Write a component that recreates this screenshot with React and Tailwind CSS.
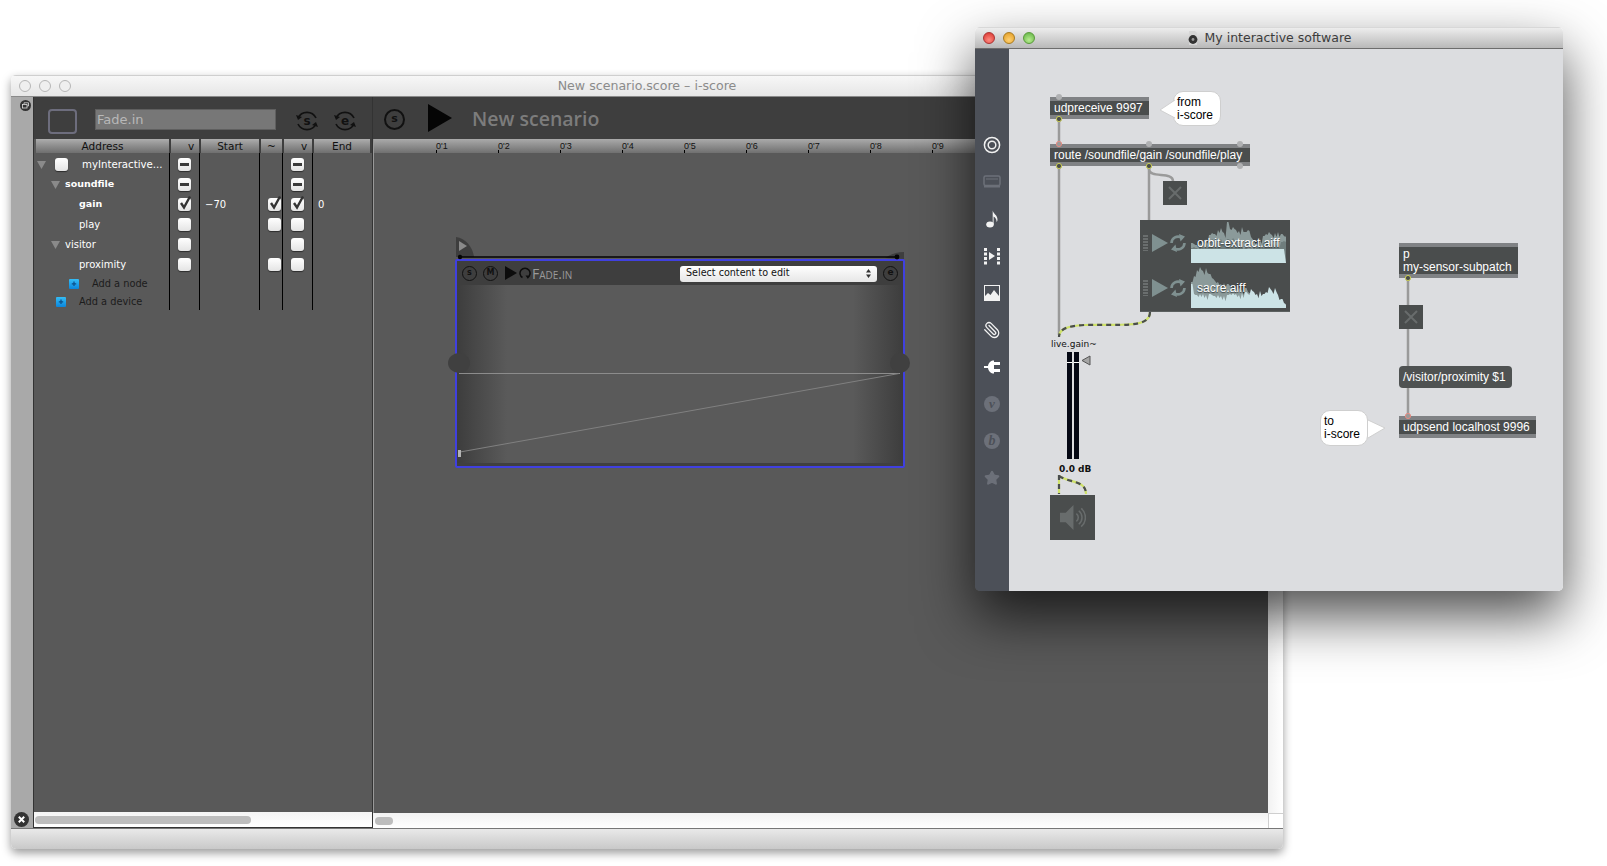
import { Paperclip, Star } from 'lucide-react'

// ── Data ────────────────────────────────────────────────────────────────────
const ROWS = [
  { name: 'myInteractive...', pad: 'pl-[2px]', tri: true, box: true, start: 'dash', end: 'dash', textPad: 'ml-[14px] text-[10.2px]' },
  { name: 'soundfile', pad: 'pl-[16px]', tri: true, bold: true, start: 'dash', end: 'dash', textPad: 'ml-[5px]' },
  { name: 'gain', pad: 'pl-[44px]', bold: true, start: 'check', mid: 'check', end: 'check', from: '−70', to: '0' },
  { name: 'play', pad: 'pl-[44px]', start: 'none', mid: 'none', end: 'none' },
  { name: 'visitor', pad: 'pl-[16px]', tri: true, start: 'none', end: 'none', textPad: 'ml-[5px]' },
  { name: 'proximity', pad: 'pl-[44px]', start: 'none', mid: 'none', end: 'none' },
]

const TICKS = [1, 2, 3, 4, 5, 6, 7, 8, 9]

const ORBIT = [20, 19, 18, 20, 22, 24, 28, 30, 29, 33, 35, 30, 41, 34, 36, 33, 32, 36, 31, 33, 26, 22, 20, 24, 27, 29, 31, 28, 30, 31, 29, 27, 31]
const ORBIT_DARK = [15, 16, 15, 17, 18, 20, 22, 24, 22, 25, 24, 22, 24, 23, 25, 22, 20, 18, 15, 14, 15, 16, 18, 19, 20, 22, 21, 20, 21, 20, 21, 22, 24]
const SACRE = [26, 32, 38, 41, 37, 40, 34, 30, 27, 26, 24, 25, 24, 22, 20, 19, 21, 18, 20, 16, 14, 13, 12, 10, 12, 14, 9, 12, 10, 8, 5, 3, 1]
const SACRE_LIGHT = [24, 14, 13, 14, 14, 13, 14, 13, 12, 13, 12, 12, 13, 14, 15, 14, 13, 15, 16, 14, 19, 16, 14, 17, 14, 16, 21, 17, 20, 13, 9, 5, 1]

// jagged silhouette: every sample gets a notch after it so the wave looks spiky
const toPoints = (arr, h, jag = 1) => {
  const pts = []
  arr.forEach((v, i) => {
    pts.push(`${i * 3},${h - v}`)
    pts.push(`${i * 3 + 1.5},${h - Math.max(0, v - ((i * 37) % 6) * jag)}`)
  })
  return `0,${h} ${pts.join(' ')} 95,${h}`
}

// ── i-score bits ────────────────────────────────────────────────────────────
function Check({ state, className = '' }) {
  return (
    <div className={`relative w-[13px] h-[13px] rounded-[3px] bg-gradient-to-b from-white to-[#e4e4e4] shadow-[0_1px_1px_rgba(0,0,0,0.5)] ${className}`}>
      {state === 'dash' && <div className="absolute left-[2px] right-[2px] top-[5px] h-[3px] bg-[#3a3a3a]" />}
      {state === 'check' && (
        <svg className="absolute -top-[3px] left-0 overflow-visible" width="15" height="16" viewBox="0 0 15 16">
          <path d="M3 8 L6 12.5 L12 1.5" fill="none" stroke="#333" strokeWidth="2.4" />
        </svg>
      )}
    </div>
  )
}

function Triangle() {
  return (
    <svg width="9" height="8" viewBox="0 0 9 8" className="shrink-0">
      <path d="M0 0 H9 L4.5 8 Z" fill="#8a8a8a" />
    </svg>
  )
}

function BluePlus() {
  return (
    <svg width="10" height="10" viewBox="0 0 10 10" className="shrink-0">
      <defs>
        <linearGradient id="bp" x1="0" y1="0" x2="0" y2="1">
          <stop offset="0" stopColor="#35bdf5" />
          <stop offset="1" stopColor="#0a86dc" />
        </linearGradient>
      </defs>
      <rect width="10" height="10" rx="1" fill="url(#bp)" />
      <path d="M5 2.5 V7 M2.8 4.8 H7.2" stroke="#0b4f8a" strokeWidth="1.2" />
    </svg>
  )
}

function SyncLetter({ letter }) {
  return (
    <svg width="24" height="24" viewBox="0 0 24 24">
      <path d="M3 9 A10 10 0 0 1 21 9" fill="none" stroke="#111" strokeWidth="1.7" />
      <path d="M21 15 A10 10 0 0 1 3 15" fill="none" stroke="#111" strokeWidth="1.7" />
      <path d="M1 6 L3 11 L7 8 Z M23 18 L21 13 L17 16 Z" fill="#111" />
      <text x="12" y="16" textAnchor="middle" fontSize="12" fontWeight="700" fontFamily="DejaVu Sans, sans-serif" fill="#111">{letter}</text>
    </svg>
  )
}

function Ring({ letter, size = 'w-[15px] h-[15px] text-[8px]', className = '' }) {
  return (
    <div className={`flex items-center justify-center rounded-full border border-[#111] text-[#111] font-bold ${size} ${className}`}>
      {letter}
    </div>
  )
}

function TreeRow({ row }) {
  const cell = 'flex items-center border-r border-black pt-[3px]'
  return (
    <div className="grid grid-cols-[135px_30px_60px_23px_30px_1fr] h-5">
      <div className={`${cell} ${row.pad}`}>
        {row.tri && <Triangle />}
        {row.box && <Check state="none" className="ml-[9px]" />}
        <span className={`${row.textPad || ''} whitespace-nowrap text-white ${row.bold ? 'font-bold text-[9.5px]' : ''}`}>{row.name}</span>
      </div>
      <div className={`${cell} pl-[8px]`}><Check state={row.start} /></div>
      <div className={`${cell} pl-[5px] text-white`}>{row.from}</div>
      <div className={`${cell} pl-[8px]`}>{row.mid && <Check state={row.mid} />}</div>
      <div className={`${cell} pl-[8px]`}><Check state={row.end} /></div>
      <div className="flex items-center pl-[5px] pt-[3px] text-white">{row.to}</div>
    </div>
  )
}

function AddRow({ label, pad, gap }) {
  return (
    <div className="grid grid-cols-[135px_30px_60px_23px_30px_1fr] h-[18px]">
      <div className={`flex items-center border-r border-black pt-[4px] text-[#1c1c1c] text-[9.8px] ${pad}`}>
        <BluePlus />
        <span className={`whitespace-nowrap ${gap}`}>{label}</span>
      </div>
      <div className="border-r border-black" />
      <div className="border-r border-black" />
      <div className="border-r border-black" />
      <div className="border-r border-black" />
      <div />
    </div>
  )
}

function Inspector() {
  const head = 'flex items-center justify-center h-[14px] pt-[2px] bg-gradient-to-b from-[#adadad] via-[#8d8d8d] to-[#6f6f6f] text-[#111] text-[10.5px] border-r-2 border-[#3e3e3e]'
  return (
    <div className="w-[340px] flex flex-col border-x border-[#333] bg-[#595959] font-['DejaVu_Sans',sans-serif] text-[10px]">
      <div className="h-[42px] bg-[#3e3e3e] flex items-start pt-3">
        <div className="ml-[14px] w-[29px] h-[25px] rounded-[4px] border-2 border-[#6d6d7d]" />
        <div className="ml-[18px] w-[181px] h-[21px] bg-[#777] border border-[#5f5f5f] pl-[1px] pt-px flex items-center text-[13px] text-[#b8b8b8]">Fade.in</div>
        <div className="ml-[19px]"><SyncLetter letter="s" /></div>
        <div className="ml-[14px]"><SyncLetter letter="e" /></div>
      </div>
      <div className="grid grid-cols-[135px_30px_60px_23px_30px_1fr] pl-[2px]">
        <div className={head}>Address</div>
        <div className={`${head} pl-[12px]`}>v</div>
        <div className={head}>Start</div>
        <div className={head}>~</div>
        <div className={`${head} pl-[12px]`}>v</div>
        <div className={`${head} border-r-0`}>End</div>
      </div>
      <div className="flex-1 pl-px">
        {ROWS.map((r) => <TreeRow key={r.name} row={r} />)}
        <AddRow label="Add a node" pad="pl-[34px]" gap="ml-[13px]" />
        <AddRow label="Add a device" pad="pl-[21px]" gap="ml-[13px]" />
      </div>
      <div className="h-[16px] bg-gradient-to-b from-[#f4f4f4] to-white flex items-center pl-px border-b border-[#333]">
        <div className="w-[216px] h-[8px] rounded-full bg-[#bdbdbd]" />
      </div>
    </div>
  )
}

function ProcessBox() {
  return (
    <div className="absolute left-[81px] top-[106px] w-[450px] h-[209px]">
      <div className="w-full h-full flex flex-col border-2 border-[#4040e0] rounded-[2px]">
        <div className="h-[24px] bg-[#3e3e3e] flex items-center pl-[5px] pr-[5px] font-['DejaVu_Sans',sans-serif]">
          <Ring letter="s" />
          <div className="ml-[6px]"><Ring letter="M" /></div>
          <svg width="13" height="14" viewBox="0 0 13 14" className="ml-[7px]"><path d="M0 0 L12 7 L0 14 Z" fill="#0c0c0c" /></svg>
          <svg width="12" height="12" viewBox="0 0 12 12" className="ml-[1px]">
            <path d="M3.5 10.5 A5 5 0 1 1 8.5 10.5" fill="none" stroke="#0c0c0c" strokeWidth="1.5" />
            <path d="M6.5 8.5 L9.8 8.5 L9 12 Z" fill="#0c0c0c" />
          </svg>
          <span className="ml-[1px] text-[14px] text-[#9a9a9a] [font-variant:small-caps] font-['Open_Sans',sans-serif]">Fade.in</span>
          <div className="ml-auto mt-px w-[197px] h-[16px] rounded-[3px] bg-gradient-to-b from-white to-[#e6e6e6] flex items-center justify-between px-[6px] text-[9.6px] text-[#111]">
            <span>Select content to edit</span>
            <svg width="5" height="9" viewBox="0 0 5 9"><path d="M0 3.5 L2.5 0 L5 3.5 Z M0 5.5 L2.5 9 L5 5.5 Z" fill="#333" /></svg>
          </div>
          <div className="ml-[6px]"><Ring letter="e" size="w-[15px] h-[15px] text-[9px]" /></div>
        </div>
        <div className="flex-1 relative bg-[linear-gradient(to_right,#3d3d3d,#5a5a5a_50px,#5a5a5a_calc(100%-50px),#3d3d3d)] border-b-[3px] border-[#404040]">
          <svg className="absolute inset-0 w-full h-full overflow-visible">
            <path d="M2 88.5 H443" stroke="#8c8c8c" strokeWidth="1" fill="none" />
            <path d="M3 167 L442 88.5" stroke="#808080" strokeWidth="1" fill="none" />
            <rect x="1" y="165" width="3" height="7" fill="#b4b4b4" />
          </svg>
        </div>
      </div>
      {/* start / end flags, date line, and side handles sit over the box border */}
      <svg className="absolute inset-0 w-full h-full overflow-visible pointer-events-none">
        <path d="M1 -22 C11 -21 18 -11 19 -2 L1 -2 Z" fill="#3e3e3e" />
        <path d="M4 -18 L12 -13 L4 -8 Z" fill="#8a8a8a" />
        <path d="M430 -1 C436 -5 442 -7 449 -7 L449 0 Z" fill="#3e3e3e" />
        <path d="M5 -2 H442" stroke="#050505" strokeWidth="1.5" />
        <circle cx="5" cy="-2" r="2.2" fill="#050505" />
        <circle cx="442" cy="-2" r="2.4" fill="#050505" />
        <ellipse cx="4" cy="104" rx="11" ry="10" fill="#404040" />
        <ellipse cx="445" cy="104" rx="10" ry="10" fill="#404040" />
      </svg>
    </div>
  )
}

function ScoreWindow() {
  return (
    <div className="absolute left-[11px] top-[75px] w-[1272px] h-[774px] flex flex-col rounded-[5px] overflow-hidden shadow-[0_4px_10px_rgba(0,0,0,0.4)]">
      <div className="relative h-[22px] flex items-center justify-center bg-gradient-to-b from-[#f7f7f7] to-[#e6e6e6] border-t border-[#cfcfcf] border-b border-b-[#8a8a8a]">
        <div className="absolute left-[8px] flex gap-2">
          <div className="w-3 h-3 rounded-full border border-[#b5b5b5] bg-[#efefef]" />
          <div className="w-3 h-3 rounded-full border border-[#b5b5b5] bg-[#efefef]" />
          <div className="w-3 h-3 rounded-full border border-[#b5b5b5] bg-[#efefef]" />
        </div>
        <span className="font-['DejaVu_Sans',sans-serif] text-[12.6px] text-[#8b8b8b]">New scenario.score – i-score</span>
      </div>
      <div className="flex-1 flex min-h-0">
        <div className="w-[22px] bg-[#a9a9a9] flex flex-col justify-between">
          <svg width="11" height="11" viewBox="0 0 11 11" className="ml-[9px] mt-[3px]">
            <circle cx="5.5" cy="5.5" r="5.5" fill="#333" />
            <rect x="2.5" y="4.5" width="4.5" height="3.5" fill="none" stroke="#ddd" strokeWidth="0.8" />
            <path d="M4 4 V2.8 H8.5 V6 H7.2" fill="none" stroke="#ddd" strokeWidth="0.8" />
          </svg>
          <svg width="15" height="15" viewBox="0 0 15 15" className="ml-[3px] mb-[1px]">
            <circle cx="7.5" cy="7.5" r="7.5" fill="#333" />
            <path d="M4.8 4.8 L10.2 10.2 M10.2 4.8 L4.8 10.2" stroke="#fff" strokeWidth="2" />
          </svg>
        </div>
        <Inspector />
        <div className="flex-1 flex flex-col min-w-0 bg-[#595959]">
          <div className="h-[42px] bg-[#3e3e3e] flex items-center pl-[11px] font-['DejaVu_Sans',sans-serif]">
            <Ring letter="s" size="w-[21px] h-[21px] text-[11px] border-2" className="mt-[2px]" />
            <svg width="24" height="28" viewBox="0 0 24 28" className="ml-[23px]"><path d="M0 0 L24 14 L0 28 Z" fill="#050505" /></svg>
            <span className="ml-[20px] mt-[2px] font-['Open_Sans',sans-serif] font-semibold text-[19.5px] text-[#7c7c7c]">New scenario</span>
          </div>
          <div className="h-[14px] flex pl-[62px] bg-gradient-to-b from-[#aaa] via-[#8d8d8d] to-[#707070] border-l border-[#999]">
            {TICKS.map((t) => (
              <div key={t} className="relative w-[62px] shrink-0">
                <div className="absolute left-0 bottom-0 w-px h-[3px] bg-black" />
                <span className="absolute left-0 top-[2px] text-[9px] leading-[11px] text-[#111] font-['Liberation_Sans',sans-serif]">0'{t}</span>
              </div>
            ))}
          </div>
          <div className="flex-1 relative border-l border-[#999]">
            <ProcessBox />
          </div>
          <div className="h-[15px] bg-gradient-to-b from-[#f2f2f2] to-white flex items-center pl-[2px]">
            <div className="w-[18px] h-[8px] rounded-full bg-[#bdbdbd]" />
          </div>
        </div>
        <div className="w-[15px] flex flex-col bg-gradient-to-r from-[#f2f2f2] to-white">
          <div className="flex-1" />
          <div className="h-[15px] border-t border-l border-[#cfcfcf] bg-white" />
        </div>
      </div>
      <div className="h-[21px] bg-gradient-to-b from-[#e9e9e9] to-[#c9c9c9] border-t border-[#777]" />
    </div>
  )
}

// ── Max patcher bits ────────────────────────────────────────────────────────
function SideIcon({ children }) {
  return <div className="h-[37px] flex items-center justify-center">{children}</div>
}

function Sidebar() {
  return (
    <div className="w-[34px] bg-[#4c5058] flex flex-col pt-[77px]">
      <SideIcon>
        <svg width="18" height="18" viewBox="0 0 18 18"><circle cx="9" cy="9" r="7.6" fill="none" stroke="#f0f0f0" strokeWidth="1.5" /><circle cx="9" cy="9" r="3.8" fill="none" stroke="#f0f0f0" strokeWidth="1.5" /></svg>
      </SideIcon>
      <SideIcon>
        <svg width="18" height="14" viewBox="0 0 18 14"><rect x="1" y="1" width="16" height="9.5" rx="1.5" fill="none" stroke="#6c7079" strokeWidth="1.5" /><path d="M1 10.5 H17 V12.5 H1 Z" fill="#6c7079" /><path d="M3 4 H15" stroke="#6c7079" /></svg>
      </SideIcon>
      <SideIcon>
        <svg width="14" height="18" viewBox="0 0 14 18"><ellipse cx="5" cy="14.5" rx="3.8" ry="3" fill="#f2f2f2" /><path d="M7.7 14.5 V0.5 C8.5 4 12.5 5 12.5 9.5 C12.5 10.5 12.2 11.5 11.6 12 C11.8 9 10 7 8.6 6.4 V14.5 Z" fill="#f2f2f2" /></svg>
      </SideIcon>
      <SideIcon>
        <svg width="16" height="18" viewBox="0 0 16 18" fill="#f2f2f2"><path d="M0 1 H3 V4 H0 Z M0 5.5 H3 V8.5 H0 Z M0 10 H3 V13 H0 Z M0 14.5 H3 V17.5 H0 Z M13 1 H16 V4 H13 Z M13 5.5 H16 V8.5 H13 Z M13 10 H16 V13 H13 Z M13 14.5 H16 V17.5 H13 Z M5 5 L11 9 L5 13 Z" /></svg>
      </SideIcon>
      <SideIcon>
        <svg width="16" height="16" viewBox="0 0 16 16"><rect width="16" height="16" fill="#f2f2f2" /><rect x="1" y="1" width="14" height="14" fill="#4c5058" /><path d="M1 15 V11 L4 8 L6.5 10 L10 5 L15 11 V15 Z" fill="#f2f2f2" /></svg>
      </SideIcon>
      <SideIcon>
        <Paperclip size={18} strokeWidth={1.7} className="text-[#f2f2f2] -scale-x-100" />
      </SideIcon>
      <SideIcon>
        <svg width="16" height="14" viewBox="0 0 16 14" fill="#fff"><path d="M0 6 H4 C4.5 2.5 7 0.5 10 0.5 V13.5 C7 13.5 4.5 11.5 4 8 H0 Z" /><rect x="10" y="2" width="6" height="3" /><rect x="10" y="9" width="6" height="3" /></svg>
      </SideIcon>
      <SideIcon>
        <div className="w-4 h-4 rounded-full bg-[#6c7079] flex items-center justify-center font-['Liberation_Serif',serif] italic font-bold text-[13px] leading-none text-[#4c5058]">v</div>
      </SideIcon>
      <SideIcon>
        <div className="w-4 h-4 rounded-full bg-[#6c7079] flex items-center justify-center font-['Liberation_Serif',serif] italic font-bold text-[14px] leading-none text-[#4c5058]">b</div>
      </SideIcon>
      <SideIcon>
        <Star size={16} className="text-[#6c7079] fill-[#6c7079]" />
      </SideIcon>
    </div>
  )
}

function Obj({ className, children }) {
  return (
    <div className={`absolute bg-[#4a4d4d] border-y-4 border-[#808285] pl-[4px] text-white leading-[13px] flex items-center whitespace-nowrap ${className}`}>
      {children}
    </div>
  )
}

function Toggle({ className }) {
  return (
    <div className={`absolute w-6 h-6 bg-[#4a4d4d] ${className}`}>
      <svg width="24" height="24" viewBox="0 0 24 24"><path d="M6 6 L18 18 M18 6 L6 18" stroke="#686c6c" strokeWidth="2" /></svg>
    </div>
  )
}

function LoopIcon() {
  return (
    <svg width="16" height="18" viewBox="0 0 16 18" className="ml-[2px]">
      <path d="M1.5 9 A6.5 6.5 0 0 1 11.5 3.7 M14.5 9 A6.5 6.5 0 0 1 4.5 14.3" fill="none" stroke="#7f9090" strokeWidth="2.6" />
      <path d="M9 0 L15 2.5 L10.5 7.5 Z M7 18 L1 15.5 L5.5 10.5 Z" fill="#7f9090" />
    </svg>
  )
}

function Grip() {
  return <div className="w-[5px] h-[16px] bg-[repeating-linear-gradient(to_bottom,#6a6e6e_0,#6a6e6e_2px,transparent_2px,transparent_3px)]" />
}

function Bubble({ className, tail, children }) {
  return (
    <div className={`absolute rounded-[10px] bg-white border border-[#cfcfcf] pl-[3px] flex items-center text-black leading-[13px] ${className}`}>
      <svg className="absolute top-0 left-0 w-full h-full overflow-visible"><path d={tail} fill="#fff" stroke="#d0d0d0" /></svg>
      <span className="relative">{children}</span>
    </div>
  )
}

function SfPlayRow({ label, wave }) {
  return (
    <div className="relative h-[41px] flex items-center pl-[3px]">
      <Grip />
      <svg width="16" height="18" viewBox="0 0 16 18" className="ml-[4px]"><path d="M0 0 L16 9 L0 18 Z" fill="#7f9090" /></svg>
      <LoopIcon />
      <svg width="95" height="41" viewBox="0 0 95 41" className="ml-[5px]">{wave}</svg>
      <span className="absolute left-[57px] top-[15px] text-white leading-[13px] [text-shadow:0_1px_1px_rgba(0,0,0,0.6)]">{label}</span>
    </div>
  )
}

function Patcher() {
  return (
    <div className="flex-1 relative bg-[#dcdde0] font-['Liberation_Sans',sans-serif] text-[12px]">
      {/* patch cords */}
      <svg className="absolute inset-0 w-full h-full">
        <g fill="none" stroke="#9a9a9a" strokeWidth="2.5">
          <path d="M50 70 V95" />
          <path d="M50 117 V286" />
          <path d="M140 117 V171" />
          <path d="M140 120 C140 130 164 122 164 132" />
          <path d="M399 229 V367" />
        </g>
        <g fill="none" stroke="#cfe26a" strokeWidth="2.2">
          <path d="M141 263 C141 280 110 275 75 276 C58 277 50 280 50 288" />
          <path d="M50 426 V445" />
          <path d="M50 427 C60 434 77 431 77 445" />
        </g>
        <g fill="none" stroke="#4a4d4d" strokeWidth="2.2" strokeDasharray="5 4">
          <path d="M141 263 C141 280 110 275 75 276 C58 277 50 280 50 288" />
          <path d="M50 426 V445" />
          <path d="M50 427 C60 434 77 431 77 445" />
        </g>
      </svg>

      <Obj className="left-[41px] top-[48px] w-[99px] h-[22px]">udpreceive 9997</Obj>
      <Bubble className="left-[164px] top-[42px] w-[48px] h-[35px]" tail="M1 8 L-14 18 L1 26">from<br />i-score</Bubble>
      <Obj className="left-[41px] top-[95px] w-[200px] h-[22px]">route /soundfile/gain /soundfile/play</Obj>
      <Toggle className="left-[154px] top-[132px]" />

      <div className="absolute left-[131px] top-[171px] w-[150px] h-[92px] bg-[#4a4d4d] pt-[2px] flex flex-col gap-[4px] border-b border-[#5c6060]">
        <SfPlayRow
          label="orbit-extract.aiff"
          wave={
            <>
              <polygon points={toPoints(ORBIT, 41)} fill="#8b9a9a" />
              <polygon points={toPoints(ORBIT_DARK, 41)} fill="#6f7d7d" />
              <polygon points="0,27 93,27 95,41 0,41" fill="#cce3e6" />
            </>
          }
        />
        <SfPlayRow
          label="sacre.aiff"
          wave={
            <>
              <polygon points={toPoints(SACRE, 41)} fill="#8b9a9a" />
              <polygon points={toPoints(SACRE_LIGHT, 41)} fill="#cce3e6" />
            </>
          }
        />
      </div>

      <div className="absolute left-[42px] top-[289px] text-[9px] leading-[12px] font-medium font-['DejaVu_Sans',sans-serif] text-[#111]">live.gain~</div>
      <div className="absolute left-[58px] top-[303px] w-[12px] h-[107px] flex gap-[2px]">
        <div className="w-[5px] bg-[#050814] relative"><div className="absolute top-[10px] w-full h-px bg-white" /></div>
        <div className="w-[5px] bg-[#050814] relative"><div className="absolute top-[10px] w-full h-px bg-white" /></div>
      </div>
      <svg className="absolute left-[72px] top-[306px]" width="10" height="11" viewBox="0 0 10 11"><path d="M9 1 L1 5.5 L9 10 Z" fill="#a5a5a5" stroke="#555" /></svg>
      <div className="absolute left-[50px] top-[414px] text-[9px] leading-[12px] font-bold font-['DejaVu_Sans',sans-serif] text-[#111]">0.0 dB</div>
      <div className="absolute left-[41px] top-[446px] w-[45px] h-[45px] bg-[#4a4d4d] flex items-center justify-center">
        <svg width="27" height="27" viewBox="0 0 28 28">
          <path d="M1 9 H7 L15 1 V27 L7 19 H1 Z" fill="#686c6c" />
          <path d="M18 10 A5 5 0 0 1 18 18 M20.5 7 A9 9 0 0 1 20.5 21 M23 4.5 A12.5 12.5 0 0 1 23 23.5" fill="none" stroke="#686c6c" strokeWidth="1.6" />
        </svg>
      </div>

      <Obj className="left-[390px] top-[194px] w-[119px] h-[35px]"><span>p<br />my-sensor-subpatch</span></Obj>
      <Toggle className="left-[390px] top-[256px]" />
      <div className="absolute left-[390px] top-[317px] w-[113px] h-[22px] rounded-[4px] bg-[#4f5252] pl-[4px] flex items-center text-white whitespace-nowrap">/visitor/proximity $1</div>
      <Bubble className="left-[311px] top-[361px] w-[48px] h-[36px]" tail="M47 9 L64 17 L47 27">to<br />i-score</Bubble>
      <Obj className="left-[390px] top-[367px] w-[137px] h-[22px]">udpsend localhost 9996</Obj>

      {/* inlets and outlets */}
      <svg className="absolute inset-0 w-full h-full pointer-events-none">
        <g fill="#b0b1b3">
          <circle cx="50" cy="48" r="3" />
          <circle cx="140" cy="95" r="3" />
          <circle cx="231" cy="95" r="3" />
          <circle cx="231" cy="117" r="3" />
        </g>
        <g fill="#4a4d4d" stroke="#c9cc55" strokeWidth="1">
          <circle cx="50" cy="70" r="2.6" />
          <circle cx="50" cy="117" r="2.6" />
          <circle cx="140" cy="117" r="2.6" />
          <circle cx="399" cy="229" r="2.6" />
        </g>
        <g fill="#9a9a9a" stroke="#e58a80" strokeWidth="1">
          <circle cx="50" cy="95" r="2.6" />
          <circle cx="399" cy="367" r="2.6" />
        </g>
      </svg>
    </div>
  )
}

function PatchWindow() {
  return (
    <div className="absolute left-[975px] top-[27px] w-[588px] h-[564px] flex flex-col rounded-[5px] overflow-hidden shadow-[0_25px_55px_rgba(0,0,0,0.7)]">
      <div className="relative h-[22px] flex items-center justify-center gap-[6px] bg-gradient-to-b from-[#ededed] to-[#b9b9b9] border-t border-[#d8d8d8] border-b border-b-[#6d6d6d]">
        <div className="absolute left-[8px] flex gap-2">
          <div className="w-3 h-3 rounded-full border border-[#a33] bg-[radial-gradient(circle_at_50%_70%,#ff8a80,#d7302a)]" />
          <div className="w-3 h-3 rounded-full border border-[#a87a20] bg-[radial-gradient(circle_at_50%_70%,#ffd070,#e09a20)]" />
          <div className="w-3 h-3 rounded-full border border-[#5a9a3a] bg-[radial-gradient(circle_at_50%_70%,#b8ec90,#5cb040)]" />
        </div>
        <svg width="12" height="14" viewBox="0 0 12 14">
          <path d="M2 0 H8 L10 2 V14 H2 Z" fill="#d6d6d6" />
          <circle cx="6" cy="8.5" r="4.4" fill="#333" />
          <circle cx="6" cy="8.5" r="1.4" fill="#999" />
        </svg>
        <span className="font-['DejaVu_Sans',sans-serif] text-[12.5px] text-[#3c3c3c]">My interactive software</span>
      </div>
      <div className="flex-1 flex min-h-0">
        <Sidebar />
        <Patcher />
      </div>
    </div>
  )
}

export default function App() {
  return (
    <div className="relative w-[1607px] h-[866px] overflow-hidden bg-white">
      <ScoreWindow />
      <PatchWindow />
    </div>
  )
}
